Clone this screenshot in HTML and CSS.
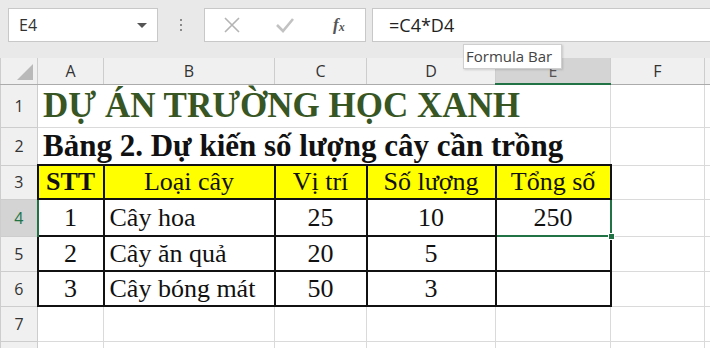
FILE: index.html
```html
<!DOCTYPE html>
<html lang="vi">
<head>
    <meta charset="UTF-8">
    <title>Bảng tính - Dự án trường học xanh</title>
    <link rel="stylesheet" href="styles.css">
</head>
<body>
    <div class="toolbar">
        <div class="name-box">
            <span>E4</span>
            <span class="caret"></span>
        </div>
        <div class="grip"><i></i><i></i><i></i></div>
        <div class="fx-buttons">
            <svg class="ico" width="18" height="18" viewBox="0 0 18 18">
                <path d="M2 2 L16 16 M16 2 L2 16" stroke="#b4b4b4" stroke-width="1.6" fill="none"/>
            </svg>
            <svg class="ico" width="20" height="18" viewBox="0 0 20 18">
                <path d="M2 9 L8 15 L18 3" stroke="#c2c2c2" stroke-width="2.6" fill="none"/>
            </svg>
            <span class="fx">f<sub>x</sub></span>
        </div>
        <div class="formula-input">=C4*D4</div>
    </div>

    <div class="tooltip">Formula Bar</div>

    <table class="sheet">
        <colgroup>
            <col style="width: 37px">
            <col style="width: 66px">
            <col style="width: 171px">
            <col style="width: 92px">
            <col style="width: 129px">
            <col style="width: 115px">
            <col style="width: 94px">
            <col>
        </colgroup>
        <tr class="col-heads">
            <th class="corner"><span class="tri"></span></th>
            <th>A</th>
            <th>B</th>
            <th>C</th>
            <th>D</th>
            <th class="active">E</th>
            <th>F</th>
            <th></th>
        </tr>
        <tr class="r1">
            <th class="row-head">1</th>
            <td colspan="5" class="title">DỰ ÁN TRƯỜNG HỌC XANH</td>
            <td></td><td></td>
        </tr>
        <tr class="r2">
            <th class="row-head">2</th>
            <td colspan="5" class="subtitle">Bảng 2. Dự kiến số lượng cây cần trồng</td>
            <td></td><td></td>
        </tr>
        <tr class="r3">
            <th class="row-head">3</th>
            <td class="box head bold">STT</td>
            <td class="box head">Loại cây</td>
            <td class="box head">Vị trí</td>
            <td class="box head">Số lượng</td>
            <td class="box head">Tổng số</td>
            <td></td><td></td>
        </tr>
        <tr class="r4">
            <th class="row-head active">4</th>
            <td class="box c">1</td>
            <td class="box">Cây hoa</td>
            <td class="box c">25</td>
            <td class="box c">10</td>
            <td class="box c selected">250<span class="handle"></span></td>
            <td></td><td></td>
        </tr>
        <tr class="r5">
            <th class="row-head">5</th>
            <td class="box c">2</td>
            <td class="box">Cây ăn quả</td>
            <td class="box c">20</td>
            <td class="box c">5</td>
            <td class="box c"></td>
            <td></td><td></td>
        </tr>
        <tr class="r6">
            <th class="row-head">6</th>
            <td class="box c">3</td>
            <td class="box">Cây bóng mát</td>
            <td class="box c">50</td>
            <td class="box c">3</td>
            <td class="box c"></td>
            <td></td><td></td>
        </tr>
        <tr class="r7">
            <th class="row-head">7</th>
            <td></td><td></td><td></td><td></td><td></td><td></td><td></td>
        </tr>
        <tr class="r8">
            <th class="row-head"></th>
            <td></td><td></td><td></td><td></td><td></td><td></td><td></td>
        </tr>
    </table>
</body>
</html>
```

FILE: styles.css
```css
* {
    margin: 0;
    padding: 0;
    box-sizing: border-box;
}

body {
    width: 710px;
    height: 348px;
    overflow: hidden;
    background: #fff;
    font-family: 'Open Sans', 'Noto Sans', sans-serif;
    position: relative;
}

/* formula bar */
.toolbar {
    background: #e9e9e9;
    height: 58px;
    padding: 8px 0 0 8px;
    display: flex;
    align-items: flex-start;
}

.name-box {
    width: 150px;
    height: 34px;
    background: #fff;
    border: 1px solid #c8c8c8;
    display: flex;
    align-items: center;
    justify-content: space-between;
    padding: 0 10px 0 10px;
    font-size: 16px;
    color: #333;
}

.caret {
    width: 0;
    height: 0;
    border-left: 5px solid transparent;
    border-right: 5px solid transparent;
    border-top: 5px solid #555;
}

.grip {
    width: 46px;
    height: 34px;
    display: flex;
    flex-direction: column;
    align-items: center;
    justify-content: center;
    gap: 3px;
}

.grip i {
    width: 2px;
    height: 2px;
    background: #8a8a8a;
}

.fx-buttons {
    width: 162px;
    height: 34px;
    background: #fff;
    border: 1px solid #c8c8c8;
    display: flex;
    align-items: center;
    padding-left: 18px;
    gap: 34px;
}

.fx {
    font-family: 'Liberation Serif', serif;
    font-style: italic;
    font-weight: bold;
    font-size: 17px;
    color: #555;
    margin-left: 4px;
}

.fx sub {
    font-size: 12px;
    vertical-align: -1px;
}

.formula-input {
    flex: 1;
    height: 34px;
    margin-left: 6px;
    background: #fff;
    border: 1px solid #c8c8c8;
    border-right: none;
    padding-left: 16px;
    line-height: 32px;
    font-size: 18px;
    color: #222;
}

.tooltip {
    position: absolute;
    left: 463px;
    top: 44px;
    width: 99px;
    height: 25px;
    background: #fff;
    border: 1px solid #cfcfcf;
    box-shadow: 1px 1px 2px rgba(0,0,0,0.15);
    font-size: 15px;
    color: #444;
    line-height: 23px;
    padding-left: 2px;
    white-space: nowrap;
    z-index: 5;
}

/* sheet grid */
.sheet {
    border-collapse: collapse;
    table-layout: fixed;
    width: 720px;
    font-family: 'Liberation Serif', 'Times New Roman', serif;
    font-size: 26px;
    color: #111;
}

.sheet td {
    border: 1px solid #dadada;
    padding: 0 5px;
    white-space: nowrap;
    overflow: visible;
}

.sheet th {
    background: #f0f0f0;
    border: 1px solid #cdcdcd;
    font-family: 'Open Sans', 'Noto Sans', sans-serif;
    font-weight: normal;
    font-size: 16px;
    color: #333;
}

.col-heads th {
    height: 26px;
    border-top: none;
    border-bottom: 1px solid #ababab;
}

.col-heads th.active {
    background: #d4d4d4;
    border-bottom: 2px solid #217346;
    color: #555;
}

.corner {
    position: relative;
}

.tri {
    position: absolute;
    right: 4px;
    bottom: 4px;
    width: 0;
    height: 0;
    border-left: 16px solid transparent;
    border-bottom: 16px solid #b9b9b9;
}

.row-head {
    font-size: 15px;
    border-right: 1px solid #ababab;
}

.row-head.active {
    background: #d4d4d4;
    color: #217346;
    border-right: 2px solid #217346;
}

.r1 { height: 43px; }
.r2 { height: 38px; }
.r3 { height: 34px; }
.r4 { height: 37px; }
.r5 { height: 35px; }
.r6 { height: 35px; }
.r7 { height: 35px; }
.r8 { height: 35px; }

.title {
    font-size: 35px;
    font-weight: bold;
    color: #375623;
    line-height: 40px;
}

.subtitle {
    font-size: 31px;
    font-weight: bold;
    line-height: 34px;
}

.sheet td.box {
    border: 2px solid #111;
    line-height: 30px;
}

.head {
    background: #ffff00;
    text-align: center;
}

.bold {
    font-weight: bold;
}

.c {
    text-align: center;
}

.sheet td.selected {
    border: 2px solid #217346;
    position: relative;
}

.handle {
    position: absolute;
    right: -5px;
    bottom: -5px;
    width: 7px;
    height: 7px;
    background: #217346;
    border: 1px solid #fff;
}
```
